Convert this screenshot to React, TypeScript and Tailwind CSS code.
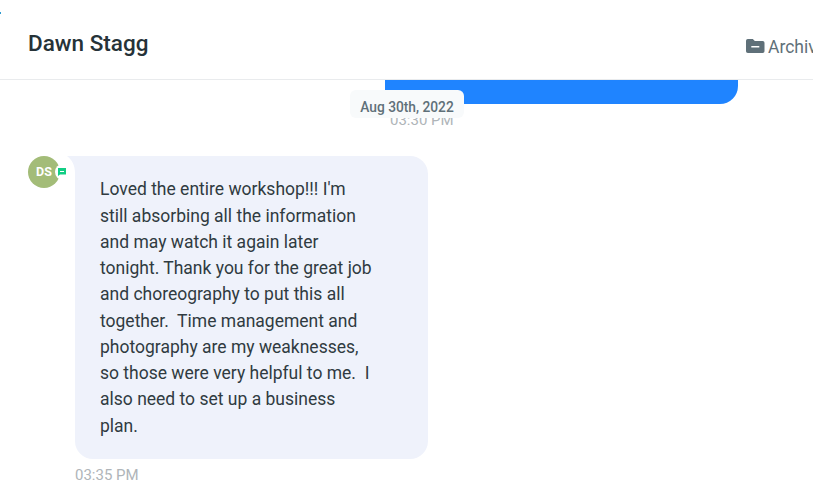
const lines = [
    "Loved the entire workshop!!! I'm",
    "still absorbing all the information",
    "and may watch it again later",
    "tonight. Thank you for the great job",
    "and choreography to put this all",
    "together.  Time management and",
    "photography are my weaknesses,",
    "so those were very helpful to me.  I",
    "also need to set up a business",
    "plan.",
];

const ArchiveIcon = () => (
    <svg width="19" height="14" viewBox="0 0 19 14" className="-mt-0.5 shrink-0">
        <path
            fillRule="evenodd"
            fill="#5f7079"
            d="M1.8 0h5l2 2h7.9A1.8 1.8 0 0 1 18.5 3.8v8.4a1.8 1.8 0 0 1-1.8 1.8H1.8A1.8 1.8 0 0 1 0 12.2V1.8A1.8 1.8 0 0 1 1.8 0ZM5.3 7v1.5h8V7Z"
        />
    </svg>
);

const Header = () => (
    <header className="h-20 shrink-0 flex items-start justify-between border-b border-[#e9ebed] pl-7">
        <div className="relative">
            <span className="absolute -left-7 top-3 h-[2px] w-px bg-[#2f9bd0]" />
            <h1 className="mt-[27px] text-[22.5px] leading-8 font-medium text-[#263238]">Dawn Stagg</h1>
        </div>
        <button className="mt-[33px] flex w-[67px] items-center gap-[3px] overflow-hidden whitespace-nowrap text-[17.5px] leading-7 text-[#5f7079]">
            <ArchiveIcon />
            <span>Archive</span>
        </button>
    </header>
);

const Avatar = () => (
    <div className="relative size-8 shrink-0 rounded-full bg-[#a3bc78] flex items-center justify-center text-[12.5px] font-bold text-white">
        DS
        <span className="absolute left-[27px] top-2 size-4 rounded-full bg-white flex items-center pl-[3px]">
            <svg width="8" height="8" viewBox="0 0 8 8">
                <path fill="#12ce84" d="M0 0h8v6.5H2L0 8Z" />
                <path fill="#fff" d="M2 3h4v1H2Z" />
            </svg>
        </span>
    </div>
);

const App = () => {
    return (
        <div className="flex h-[489px] w-full flex-col overflow-hidden bg-white font-['Roboto',sans-serif]">
            <Header />
            <main className="relative flex-1 pl-7">
                <div className="ml-[357px] flex w-[353px] flex-col">
                    <div className="h-6 rounded-br-[18px] bg-[#1f84ff]" />
                    <span className="ml-[5px] mt-[6px] text-[15px] leading-5 text-[#afb5b9]">03:30 PM</span>
                </div>
                <div className="absolute left-[350px] top-[10px] flex h-7 w-[114px] items-center justify-center rounded-md bg-[#f8fafb] pt-1.5 text-[13.75px] font-medium text-[#5f7079]">
                    Aug 30th, 2022
                </div>

                <div className="mt-[26px] flex items-start">
                    <Avatar />
                    <div className="ml-[15px] w-[353px]">
                        <div className="relative h-[303px] rounded-[18px] rounded-tl-none bg-[#eff2fb] pl-[25px] pt-[20.3px]">
                            <svg width="9" height="17" viewBox="0 0 9 17" className="absolute -left-2 top-0">
                                <path fill="#eff2fb" d="M0 0h9v17H8C8 9 5 4 0 0Z" />
                            </svg>
                            {
                                lines.map((line) => (
                                    <p key={line} className="whitespace-pre text-[17.5px] leading-[26.25px] text-[#303b41]">{line}</p>
                                ))
                            }
                        </div>
                        <p className="mt-1.5 text-[15px] leading-5 text-[#afb5b9]">03:35 PM</p>
                    </div>
                </div>
            </main>
        </div>
    )
}

export default App;
